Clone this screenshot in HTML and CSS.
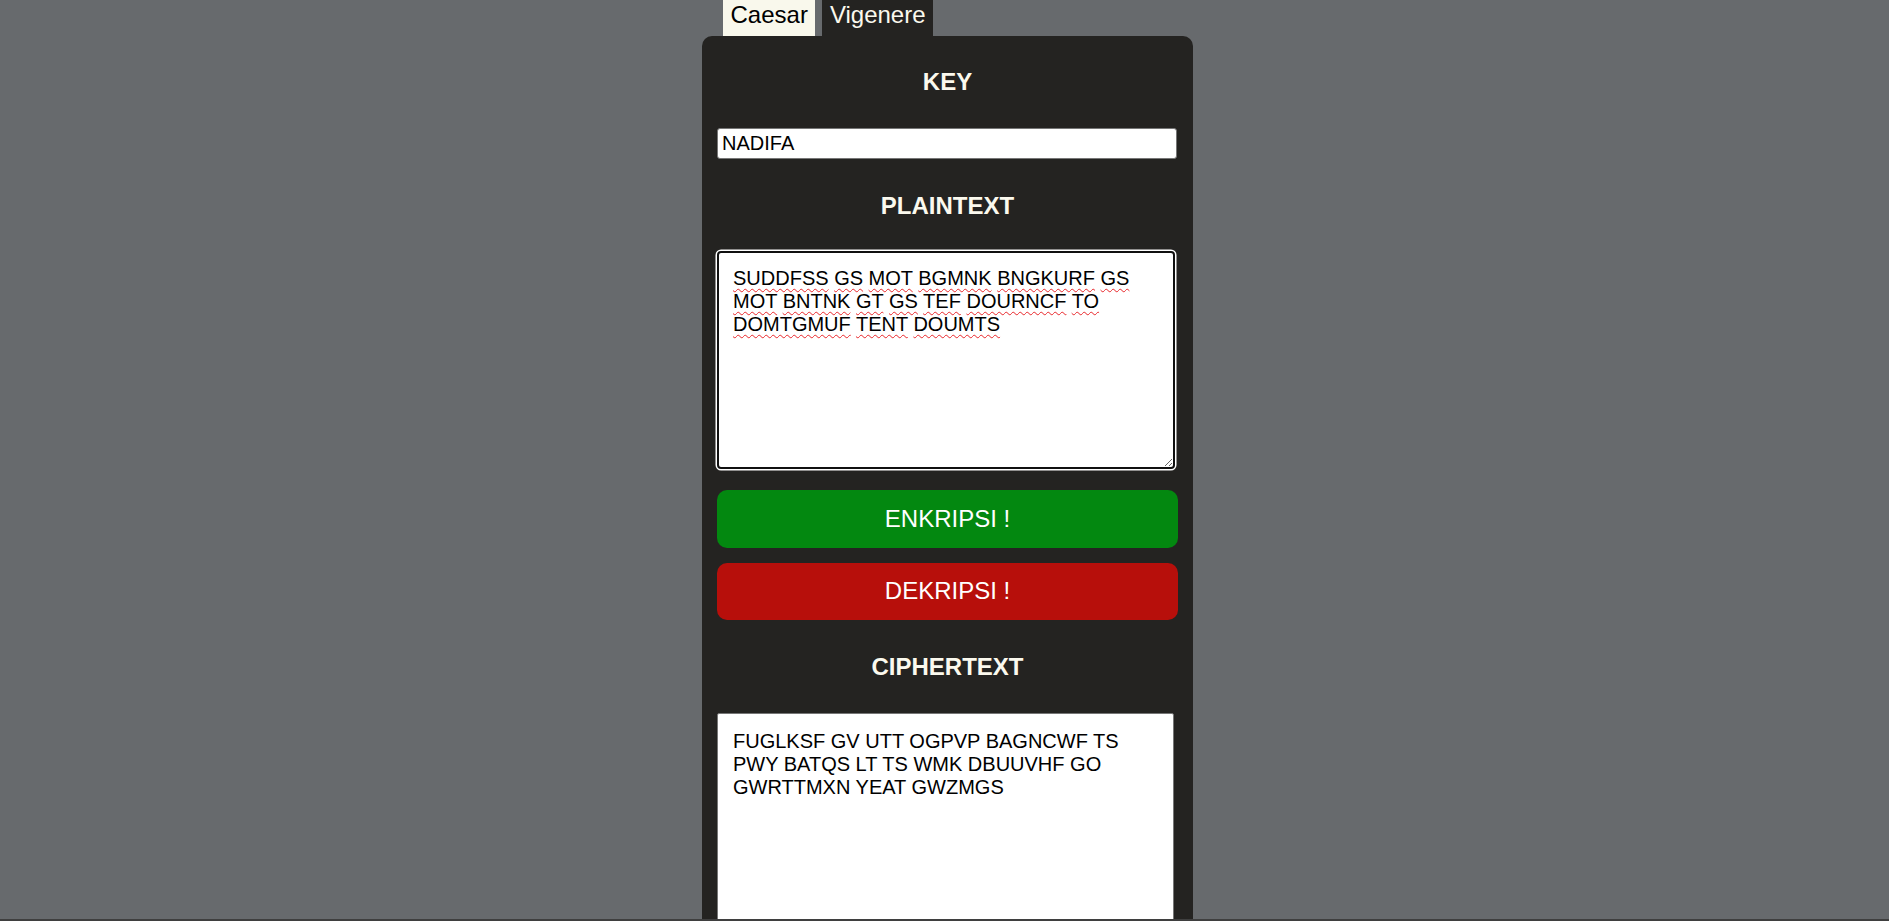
FILE: index.html
```html
<!DOCTYPE html>
<html lang="id">
<head>
<meta charset="utf-8">
<title>Vigenere Cipher</title>
<link rel="stylesheet" href="styles.css">
</head>
<body>
<div class="page">
  <div class="app">
    <nav class="tabs">
      <button class="tab tab-light" type="button">Caesar</button>
      <button class="tab tab-active" type="button">Vigenere</button>
    </nav>
    <main class="panel">
      <h2 class="heading">KEY</h2>
      <input class="key-input" type="text" value="NADIFA" spellcheck="false">
      <h2 class="heading heading-gap">PLAINTEXT</h2>
      <div class="textbox textbox-focus" role="textbox" aria-multiline="true" contenteditable="true" spellcheck="false"><span class="miss">SUDDFSS</span> <span class="miss">GS</span> <span class="miss">MOT</span> <span class="miss">BGMNK</span> <span class="miss">BNGKURF</span> <span class="miss">GS</span> <span class="miss">MOT</span> <span class="miss">BNTNK</span> <span class="miss">GT</span> <span class="miss">GS</span> <span class="miss">TEF</span> <span class="miss">DOURNCF</span> <span class="miss">TO</span> <span class="miss">DOMTGMUF</span> <span class="miss">TENT</span> <span class="miss">DOUMTS</span></div>
      <div class="actions">
        <button class="action action-encrypt" type="button">ENKRIPSI !</button>
        <button class="action action-decrypt" type="button">DEKRIPSI !</button>
      </div>
      <h2 class="heading heading-gap heading-cipher">CIPHERTEXT</h2>
      <textarea class="textbox textbox-plain" readonly spellcheck="false">FUGLKSF GV UTT OGPVP BAGNCWF TS PWY BATQS LT TS WMK DBUUVHF GO GWRTTMXN YEAT GWZMGS</textarea>
    </main>
  </div>
</div>
<div class="window-edge"></div>
</body>
</html>
```

FILE: styles.css
```css
html, body {
  margin: 0;
  padding: 0;
  height: 100%;
  overflow: hidden;
}

body {
  background: #676a6d;
  font-family: "Liberation Sans", Arial, sans-serif;
}

.page {
  display: flex;
  justify-content: center;
  padding-left: 6px;
}

.app {
  width: 491px;
  display: flex;
  flex-direction: column;
}

.tabs {
  display: flex;
  gap: 7px;
  padding-left: 21px;
}

.tab {
  font-family: "Liberation Sans", Arial, sans-serif;
  font-size: 24px;
  line-height: 28px;
  height: 36px;
  padding: 1px 7.5px 7px;
  border: none;
  margin: 0;
  cursor: pointer;
}

.tab-light {
  background: #f9f8ec;
  color: #000;
}

.tab-active {
  background: #242321;
  color: #fbf9ee;
}

.panel {
  background: #242321;
  border-radius: 10px;
  padding: 32px 15px 0;
  display: flex;
  flex-direction: column;
  min-height: 900px;
}

.heading {
  margin: 0 0 32px;
  font-size: 24px;
  line-height: 28px;
  font-weight: bold;
  text-align: center;
  color: #fbf9ee;
}

.heading-gap {
  margin-top: 33px;
  margin-bottom: 31px;
}

.heading-cipher {
  margin-bottom: 32px;
}

.key-input {
  box-sizing: border-box;
  width: 460px;
  height: 31px;
  margin: 0;
  padding: 3px 3px 3px 4px;
  font-family: "Liberation Sans", Arial, sans-serif;
  font-size: 20px;
  line-height: 23px;
  color: #000;
  background: #fff;
  border: 1px solid #767676;
  border-radius: 3px;
  outline: none;
}

.textbox {
  box-sizing: border-box;
  margin: 0;
  font-family: "Liberation Sans", Arial, sans-serif;
  font-size: 20px;
  line-height: 23px;
  color: #000;
  background: #fff;
  white-space: pre-wrap;
  word-wrap: break-word;
}

.textbox-focus {
  width: 458px;
  height: 218px;
  padding: 14px 14px;
  border: 2.5px solid #101010;
  border-radius: 4px;
  box-shadow: 0 0 0 1.5px #fff;
  overflow: auto;
  resize: vertical;
  outline: none;
}

.miss {
  text-decoration: underline wavy #e8262a;
  text-decoration-thickness: 1.3px;
  text-underline-offset: 3px;
  text-decoration-skip-ink: none;
}

.textbox-plain {
  width: 457px;
  height: 218px;
  padding: 16px 15px;
  border: 1px solid #767676;
  border-radius: 2px;
  resize: vertical;
  outline: none;
}

.actions {
  display: flex;
  flex-direction: column;
  gap: 15px;
  margin-top: 21px;
}

.action {
  height: 57.5px;
  width: 100%;
  border: none;
  border-radius: 10px;
  font-family: "Liberation Sans", Arial, sans-serif;
  font-size: 24px;
  color: #fff;
  cursor: pointer;
}

.action-encrypt {
  background: #038810;
}

.action-decrypt {
  background: #b70f0b;
}

.window-edge {
  position: fixed;
  left: 0;
  right: 0;
  bottom: 0;
  height: 2px;
  background: #3f3f3f;
}
```
